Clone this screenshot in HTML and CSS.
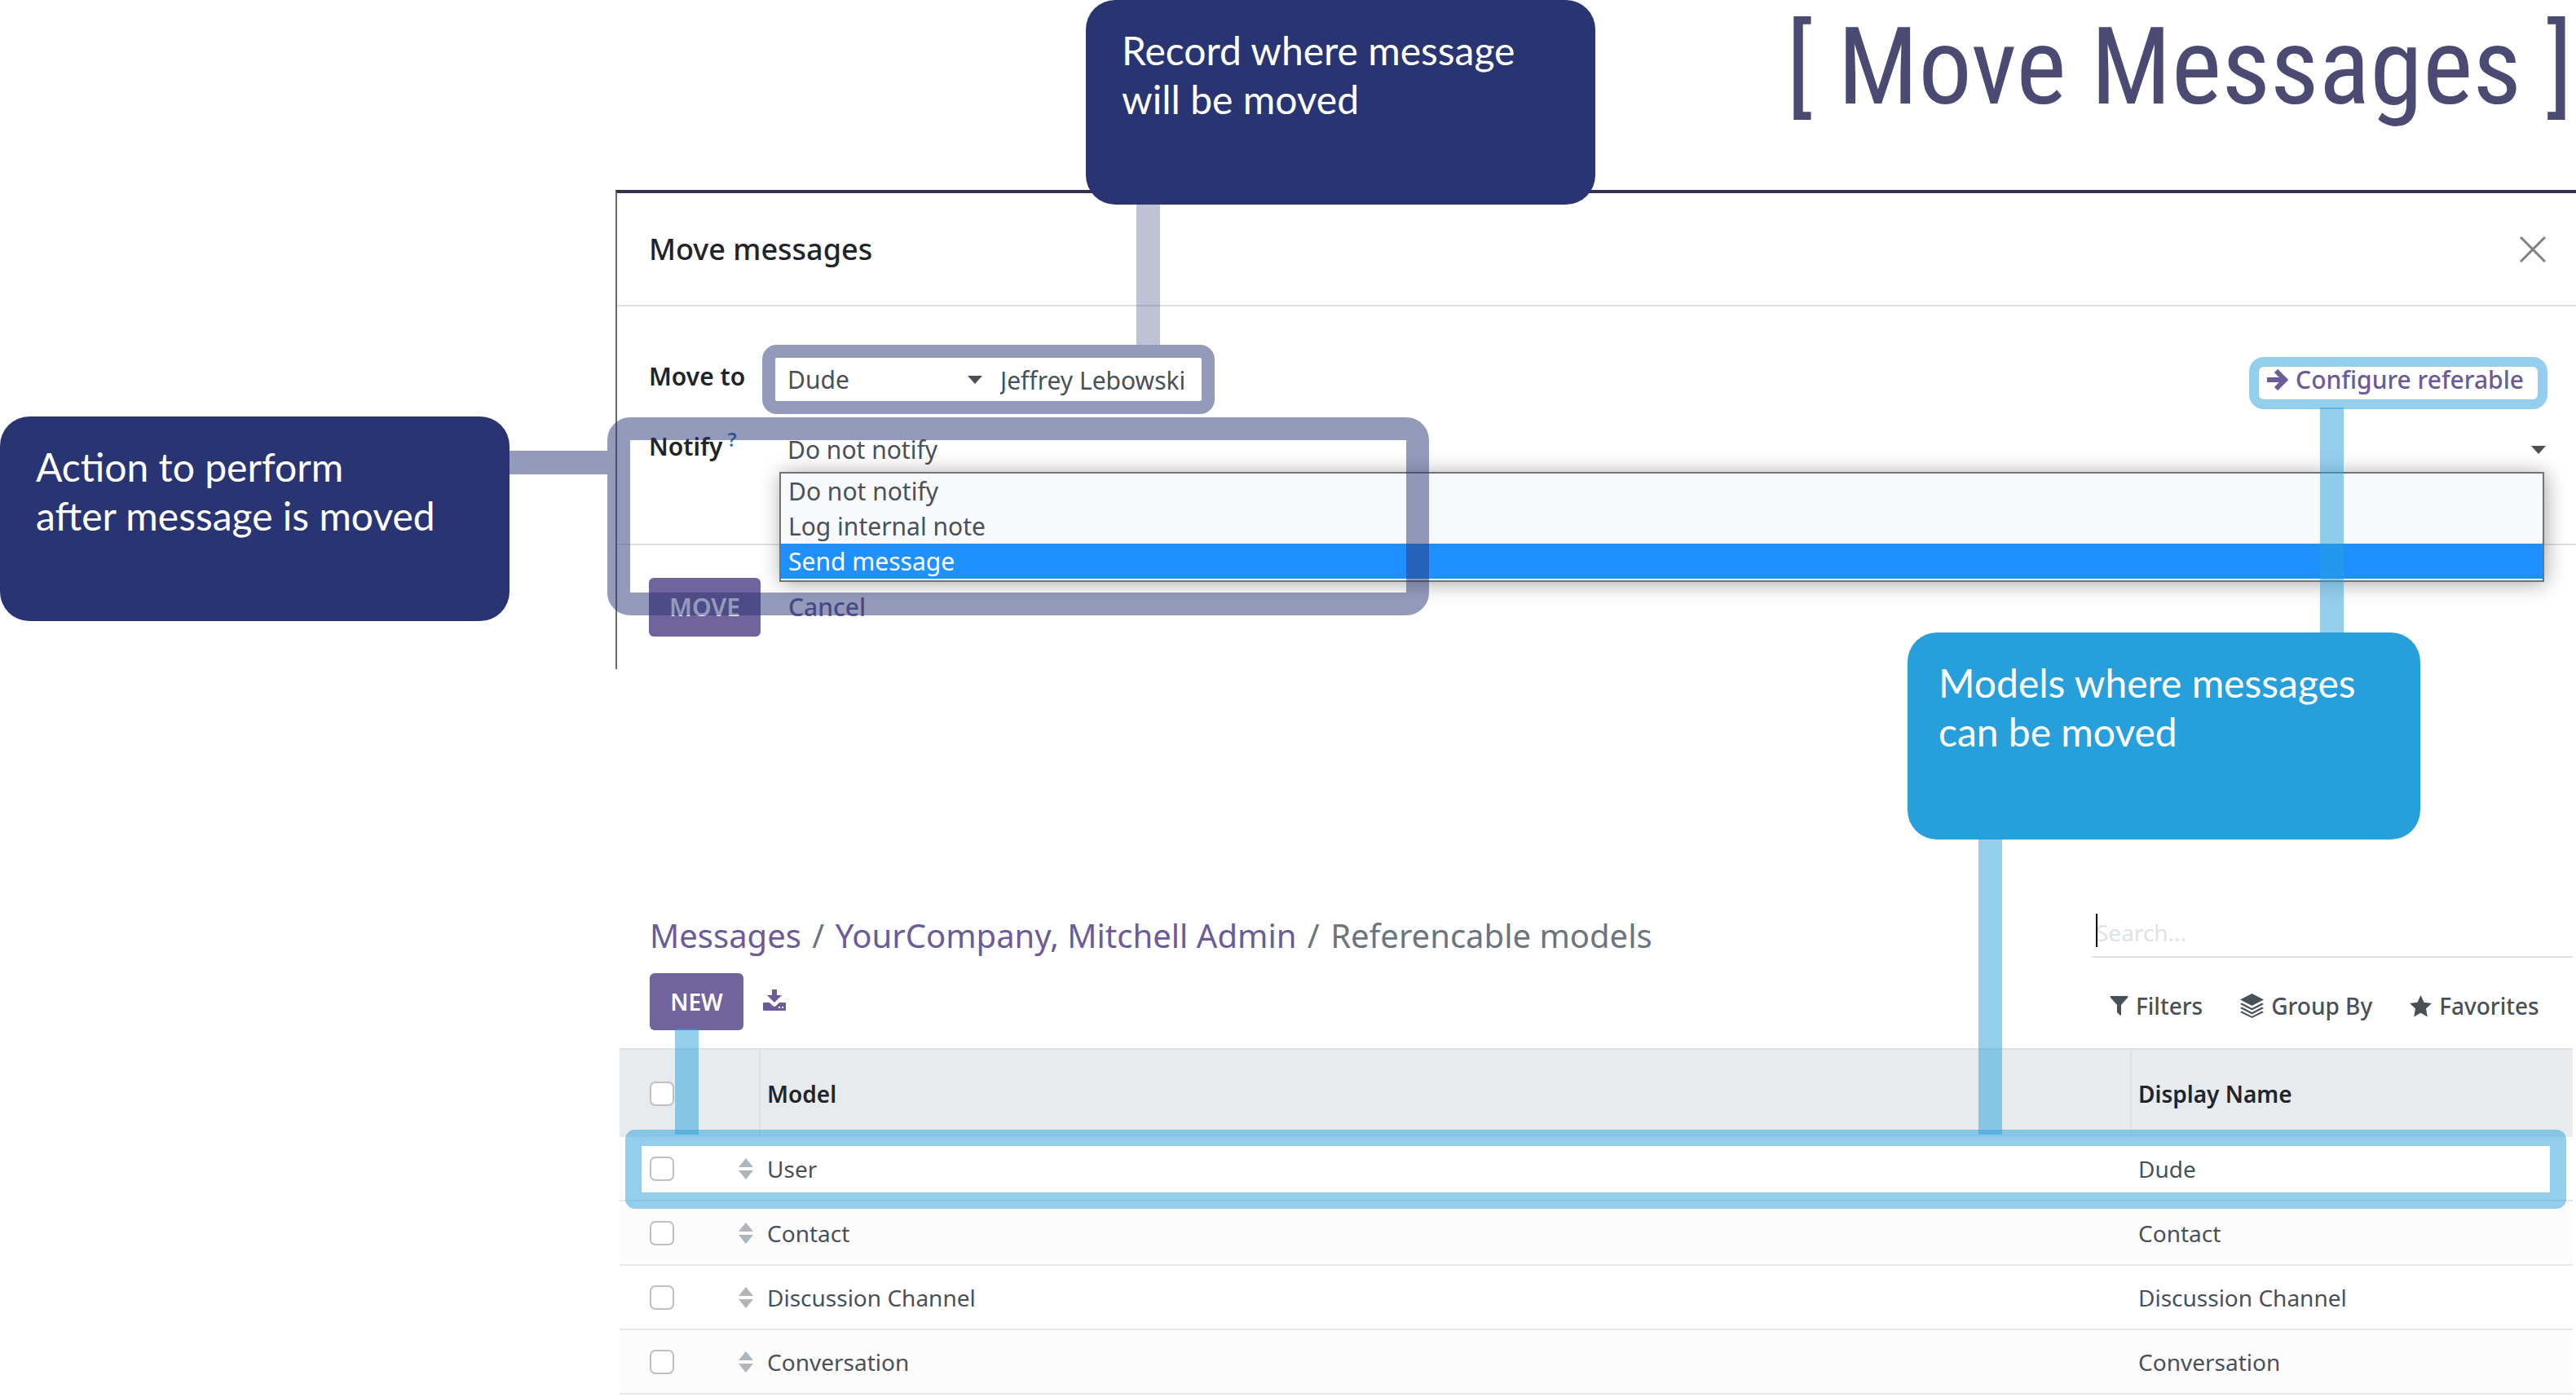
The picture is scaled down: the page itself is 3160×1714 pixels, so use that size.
FILE: index.html
```html
<!DOCTYPE html>
<html lang="en">
<head>
<meta charset="utf-8">
<title>Move Messages</title>
<link rel="stylesheet" href="styles.css">
</head>
<body>
<div class="page">
  <header class="page-header">
    <h1 class="page-title">[ Move Messages ]</h1>
  </header>

  <section class="modal" aria-labelledby="modal-title">
    <div class="modal-header">
      <h2 class="modal-title" id="modal-title">Move messages</h2>
      <button class="close" type="button" aria-label="Close">
        <svg width="32" height="32" viewBox="0 0 32 32" fill="none" stroke="#808080" stroke-width="3"><path d="M1 1l30 30M31 1L1 31"/></svg>
      </button>
    </div>

    <div class="modal-body">
      <div class="field">
        <label class="field-label" for="move-model">Move to</label>
        <div class="select select-model">
          <select id="move-model"><option>Dude</option></select>
          <svg class="caret" width="18" height="10" viewBox="0 0 18 10" fill="#495057"><path d="M0 0h18l-9 10z"/></svg>
        </div>
        <input class="record" type="text" value="Jeffrey Lebowski" aria-label="Record">
        <a class="configure" href="#models">
          <svg width="26" height="26" viewBox="0 0 26 26" fill="none" stroke="#6b5b98" stroke-width="6"><path d="M0 13h21M11 2l11 11-11 11"/></svg>
          Configure referable
        </a>
      </div>

      <div class="field">
        <label class="field-label" for="notify">Notify<sup class="help">?</sup></label>
        <div class="select select-notify">
          <select id="notify"><option>Do not notify</option></select>
          <svg class="caret" width="18" height="10" viewBox="0 0 18 10" fill="#495057"><path d="M0 0h18l-9 10z"/></svg>
          <ul class="options" role="listbox" aria-label="Notify options">
            <li class="option" role="option">Do not notify</li>
            <li class="option" role="option">Log internal note</li>
            <li class="option option-active" role="option" aria-selected="true">Send message</li>
          </ul>
        </div>
      </div>
    </div>

    <div class="modal-footer">
      <button class="btn btn-move" type="button">MOVE</button>
      <button class="btn-link" type="button">Cancel</button>
    </div>
  </section>

  <section class="list" id="models">
    <div class="list-header">
      <div class="list-main">
        <nav class="breadcrumb" aria-label="Breadcrumb">
          <a href="#messages">Messages</a> <span class="slash">/</span> <a href="#company">YourCompany, Mitchell Admin</a> <span class="slash">/</span> <span>Referencable models</span>
        </nav>
        <div class="actions">
          <button class="btn btn-new" type="button">NEW</button>
          <button class="icon-button" type="button" aria-label="Export">
            <svg width="28" height="26" viewBox="0 0 28 26" fill="#6b5b98"><path fill-rule="evenodd" d="M11 0h6v7h6l-9 9-9-9h6zM0 17q0-1 1-1h7l4 4q2 2 4 0l4-4h7q1 0 1 1v8q0 1-1 1H1q-1 0-1-1zM19 21v2h2v-2zM23 21v2h2v-2z"/></svg>
          </button>
        </div>
      </div>

      <div class="search">
        <div class="search-box">
          <input class="search-input" type="search" placeholder="Search..." aria-label="Search">
          <span class="text-cursor"></span>
        </div>
        <div class="filters">
          <button class="filter" type="button">
            <svg width="23" height="24" viewBox="0 0 23 24" fill="#495057"><path d="M1 0h21q1 1 0 2l-8 9v12q0 1-1 1l-4-4v-9L1 2Q0 1 1 0z"/></svg>
            Filters
          </button>
          <button class="filter" type="button">
            <svg width="29" height="30" viewBox="0 0 29 30" fill="#495057"><path d="M14.500 0L29 7.500 14.500 15 0 7.500zM2 11.500l12.500 6.500L27 11.500l2 1.500-14.500 7.500L0 13zM2 16.500L14.500 23 27 16.500l2 1.500-14.500 7.500L0 18zM2 21.500L14.500 28 27 21.500l2 1.500-14.500 7L0 23z"/></svg>
            Group By
          </button>
          <button class="filter" type="button">
            <svg width="27" height="27" viewBox="0 0 27 27" fill="#495057"><path d="M13.500 0l4 8.800 9.500 1.300-7 6.500 1.800 9.900-8.300-4.800-8.300 4.800L7 16.600 0 10.100l9.500-1.300z"/></svg>
            Favorites
          </button>
        </div>
      </div>
    </div>

    <table class="table">
      <thead>
        <tr>
          <th class="col-check"><input type="checkbox" aria-label="Select all"></th>
          <th class="col-handle"></th>
          <th class="col-model">Model</th>
          <th class="col-name">Display Name</th>
        </tr>
      </thead>
      <tbody>
        <tr>
          <td class="col-check"><input type="checkbox" aria-label="Select User"></td>
          <td class="col-handle"><svg width="18" height="26" viewBox="0 0 18 26" fill="#adb5bd"><path d="M0 11L9 0l9 11zM0 15h18L9 26z"/></svg></td>
          <td>User</td>
          <td>Dude</td>
        </tr>
        <tr>
          <td class="col-check"><input type="checkbox" aria-label="Select Contact"></td>
          <td class="col-handle"><svg width="18" height="26" viewBox="0 0 18 26" fill="#adb5bd"><path d="M0 11L9 0l9 11zM0 15h18L9 26z"/></svg></td>
          <td>Contact</td>
          <td>Contact</td>
        </tr>
        <tr>
          <td class="col-check"><input type="checkbox" aria-label="Select Discussion Channel"></td>
          <td class="col-handle"><svg width="18" height="26" viewBox="0 0 18 26" fill="#adb5bd"><path d="M0 11L9 0l9 11zM0 15h18L9 26z"/></svg></td>
          <td>Discussion Channel</td>
          <td>Discussion Channel</td>
        </tr>
        <tr>
          <td class="col-check"><input type="checkbox" aria-label="Select Conversation"></td>
          <td class="col-handle"><svg width="18" height="26" viewBox="0 0 18 26" fill="#adb5bd"><path d="M0 11L9 0l9 11zM0 15h18L9 26z"/></svg></td>
          <td>Conversation</td>
          <td>Conversation</td>
        </tr>
      </tbody>
    </table>
  </section>

  <!-- Callouts, connectors and highlight frames laid over the screens -->
  <div class="connector connector-record"></div>
  <div class="frame frame-record"></div>
  <p class="callout callout-record">Record where message<br>will be moved</p>

  <div class="connector connector-action"></div>
  <div class="frame frame-action"></div>
  <p class="callout callout-action">Action to perform<br>after message is moved</p>

  <div class="connector connector-configure"></div>
  <div class="frame frame-configure"></div>
  <div class="connector connector-models"></div>
  <div class="connector connector-new"></div>
  <div class="frame frame-models"></div>
  <p class="callout callout-models">Models where messages<br>can be moved</p>
</div>
</body>
</html>
```
FILE: styles.css
```css
* {
  box-sizing: border-box;
}

body {
  margin: 0;
  background: #fff;
  color: #495057;
  font: 400 28px/40px "Noto Sans", "Open Sans", sans-serif;
}

button,
input,
select {
  margin: 0;
  padding: 0;
  border: 0;
  border-radius: 0;
  background: none;
  color: inherit;
  font: inherit;
  appearance: none;
  outline: none;
}

svg {
  display: block;
  flex: none;
}

.page {
  position: relative;
  overflow: hidden;
}

.page-header {
  height: 233px;
  padding: 6px 4px 0 0;
}

.page-title {
  margin: 0;
  color: #4a4a73;
  font: 400 131px/152px "Roboto Condensed", "Roboto", sans-serif;
  text-align: right;
  white-space: nowrap;
}

/* Move messages dialog */

.modal {
  margin-left: 755px;
  border-top: 4px solid #38304f;
  border-left: 2px solid #6a6a6e;
  font-size: 30px;
}

.modal-header {
  display: flex;
  align-items: center;
  justify-content: space-between;
  height: 139px;
  padding: 0 37px 0 39px;
  border-bottom: 2px solid #dee2e6;
}

.modal-title {
  margin: 0;
  color: #212529;
  font-size: 36px;
  font-weight: 500;
}

.modal-body {
  display: flex;
  flex-direction: column;
  gap: 22px;
  padding: 58px 37px 83px 39px;
}

.field {
  display: flex;
  align-items: center;
  height: 64px;
}

.field-label {
  width: 170px;
  padding-bottom: 8px;
  color: #212529;
  font-weight: 600;
}

.help {
  margin-left: 6px;
  color: #2b76ab;
  font-size: 24px;
  line-height: 0;
}

.select {
  display: grid;
  align-items: center;
}

.select > select,
.select > .caret {
  grid-area: 1 / 1;
}

.select > select {
  width: 100%;
  height: 64px;
}

.caret {
  justify-self: end;
  pointer-events: none;
}

.select-model {
  width: 239px;
}

.record {
  width: 240px;
  height: 64px;
  margin-left: 22px;
}

.configure {
  display: flex;
  align-items: center;
  gap: 9px;
  margin: 0 27px 0 auto;
  color: #6b5b98;
  font-weight: 500;
  text-decoration: none;
}

.select-notify {
  position: relative;
  flex: 1;
}

.options {
  position: absolute;
  top: 59px;
  right: 2px;
  left: -10px;
  margin: 0;
  padding: 0 0 2px;
  border: 2px solid #707377;
  background: #f8f9fb;
  box-shadow: 2px 2px 24px rgba(0, 0, 0, 0.35);
  list-style: none;
}

.option {
  padding-left: 9px;
  line-height: 43px;
}

.option-active {
  background: #1e90ff;
  color: #fff;
}

.modal-footer {
  display: flex;
  gap: 34px;
  padding: 40px 39px;
  border-top: 2px solid #dee2e6;
}

.btn {
  border-radius: 6px;
  background: #71639e;
  color: #fff;
  font-weight: 600;
}

.btn-move {
  width: 137px;
  height: 72px;
}

.btn-link {
  color: #6b5b98;
  font-weight: 500;
}

/* Referencable models list */

.list {
  margin: 294px 4px 0 760px;
}

.list-header {
  display: flex;
  justify-content: space-between;
  height: 171px;
}

.list-main {
  padding: 5px 0 0 37px;
}

.breadcrumb {
  color: #6c757d;
  font-size: 40px;
  line-height: 56px;
  white-space: nowrap;
}

.breadcrumb a {
  color: #6b5b98;
  text-decoration: none;
}

.slash {
  margin: 0 3px;
}

.actions {
  display: flex;
  gap: 24px;
  padding-top: 18px;
}

.btn-new {
  width: 115px;
  height: 70px;
}

.icon-button {
  height: 66px;
}

.search {
  width: 590px;
}

.search-box {
  position: relative;
  border-bottom: 2px solid #dee2e6;
}

.search-input {
  display: block;
  width: 100%;
  height: 58px;
  padding-left: 5px;
}

.search-input::placeholder {
  color: #dee2e6;
  opacity: 1;
}

.text-cursor {
  position: absolute;
  top: 6px;
  left: 5px;
  width: 2px;
  height: 41px;
  background: #000;
}

.filters {
  display: flex;
  gap: 46px;
  padding: 39px 0 0 22px;
}

.filter {
  display: flex;
  align-items: center;
  gap: 9px;
  font-weight: 500;
  white-space: nowrap;
}

.table {
  width: 100%;
  border-spacing: 0;
  table-layout: fixed;
}

.table th,
.table td {
  padding: 0 0 0 8px;
  text-align: left;
}

.table th {
  height: 109px;
  border-top: 2px solid #dee2e6;
  background: #e7ebee;
  color: #212529;
  font-weight: 600;
}

.table td {
  height: 79px;
  border-bottom: 2px solid #e6e9ec;
}

.table tbody tr:nth-child(even) {
  background: #fcfcfc;
}

.table .col-check {
  width: 100px;
  padding-left: 37px;
}

.table .col-handle {
  width: 73px;
  padding-left: 46px;
}

.table th.col-handle,
.table th.col-model {
  border-right: 2px solid #dee2e6;
}

.table .col-name {
  width: 541px;
}

.table input {
  display: block;
  width: 30px;
  height: 30px;
  border: 2px solid #bfbfbf;
  border-radius: 7px;
  background: #fff;
}

/* Annotations */

.callout {
  position: absolute;
  width: 625px;
  height: 251px;
  margin: 0;
  padding: 32px 40px 0 44px;
  border-radius: 36px;
  background: #293573;
  color: #fff;
  font: 400 48px/60px "Lato", sans-serif;
  white-space: nowrap;
}

.callout-record {
  top: 0;
  left: 1332px;
}

.callout-action {
  top: 511px;
  left: 0;
}

.callout-models {
  top: 776px;
  right: 191px;
  width: 629px;
  height: 254px;
  padding-left: 38px;
  background: #279fdb;
}

.frame {
  position: absolute;
  border: 16px solid rgba(41, 53, 115, 0.5);
  border-radius: 18px;
  pointer-events: none;
}

.frame-record {
  top: 423px;
  left: 935px;
  width: 555px;
  height: 85px;
}

.frame-action {
  top: 512px;
  left: 745px;
  width: 1008px;
  height: 243px;
  border-width: 28px;
  border-radius: 28px;
}

.frame-configure {
  top: 438px;
  right: 35px;
  width: 366px;
  height: 64px;
  border-width: 12px;
  border-color: rgba(39, 159, 219, 0.5);
}

.frame-models {
  top: 1386px;
  right: 12px;
  left: 767px;
  height: 97px;
  border-width: 20px;
  border-radius: 12px;
  border-color: rgba(39, 159, 219, 0.5);
}

.connector {
  position: absolute;
  width: 29px;
  background: rgba(39, 159, 219, 0.5);
  pointer-events: none;
}

.connector-record {
  top: 250px;
  left: 1394px;
  height: 173px;
  background: rgba(41, 53, 115, 0.3);
}

.connector-action {
  top: 553px;
  left: 625px;
  width: 120px;
  height: 29px;
  background: rgba(41, 53, 115, 0.5);
}

.connector-configure {
  top: 500px;
  right: 285px;
  height: 276px;
}

.connector-models {
  top: 1030px;
  right: 704px;
  height: 362px;
}

.connector-new {
  top: 1262px;
  left: 828px;
  height: 130px;
}
```
